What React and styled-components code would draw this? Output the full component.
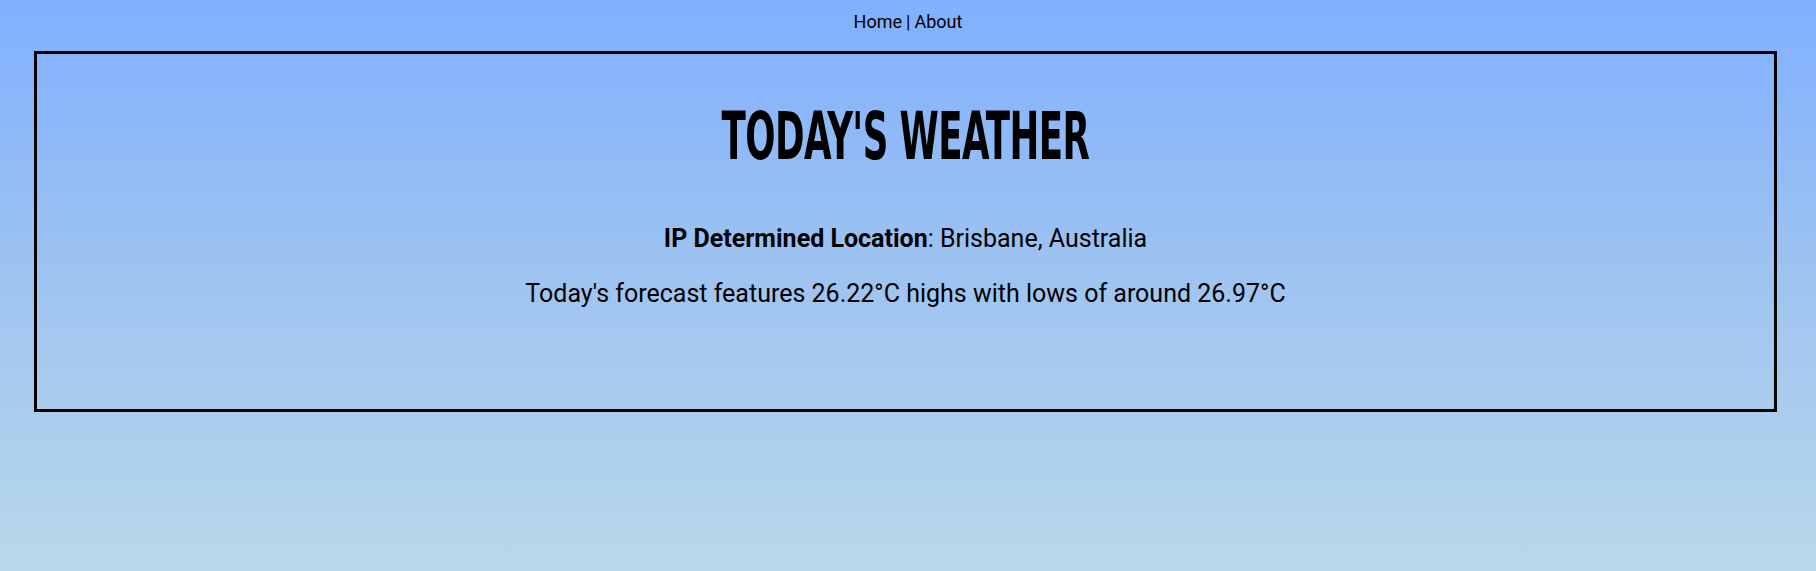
import React from 'react';
import styled, { createGlobalStyle } from 'styled-components';

const GlobalStyle = createGlobalStyle`
  html, body {
    margin: 0;
    padding: 0;
  }
  body {
    min-height: 571px;
    background: linear-gradient(180deg, #80b0ff 0%, #9fc4f0 50%, #b9d8ea 100%);
    font-family: Roboto, "Liberation Sans", sans-serif;
    color: #000;
  }
`;

const Page = styled.div`
  display: flex;
  flex-direction: column;
  min-height: 571px;
`;

const Nav = styled.nav`
  display: flex;
  justify-content: center;
  gap: 4px;
  padding: 11px 0 19px;
  font-size: 18px;
  line-height: 21px;
`;

const NavLink = styled.a`
  color: #000;
  text-decoration: none;
`;

const Card = styled.section`
  margin: 0 39px 0 34px;
  height: 361px;
  box-sizing: border-box;
  border: 3px solid #000;
  display: flex;
  flex-direction: column;
  align-items: center;
`;

const Title = styled.h1`
  margin: 46px 0 0;
  font-family: "DejaVu Sans Condensed", "DejaVu Sans", sans-serif;
  font-weight: bold;
  font-size: 66px;
  line-height: 74px;
  text-transform: uppercase;
  transform: scaleX(0.6);
  letter-spacing: -1px;
  white-space: nowrap;
`;

const Line = styled.p`
  margin: ${(p) => p.$top}px 0 0;
  font-size: 25px;
  line-height: 29px;
`;

const App = () => (
  <Page>
    <GlobalStyle />
    <Nav>
      <NavLink href="#">Home</NavLink>
      <span>|</span>
      <NavLink href="#">About</NavLink>
    </Nav>
    <Card>
      <Title>Today's Weather</Title>
      <Line $top={50}>
        <strong>IP Determined Location</strong>: Brisbane, Australia
      </Line>
      <Line $top={26}>Today's forecast features 26.22°C highs with lows of around 26.97°C</Line>
    </Card>
  </Page>
);

export default App;
